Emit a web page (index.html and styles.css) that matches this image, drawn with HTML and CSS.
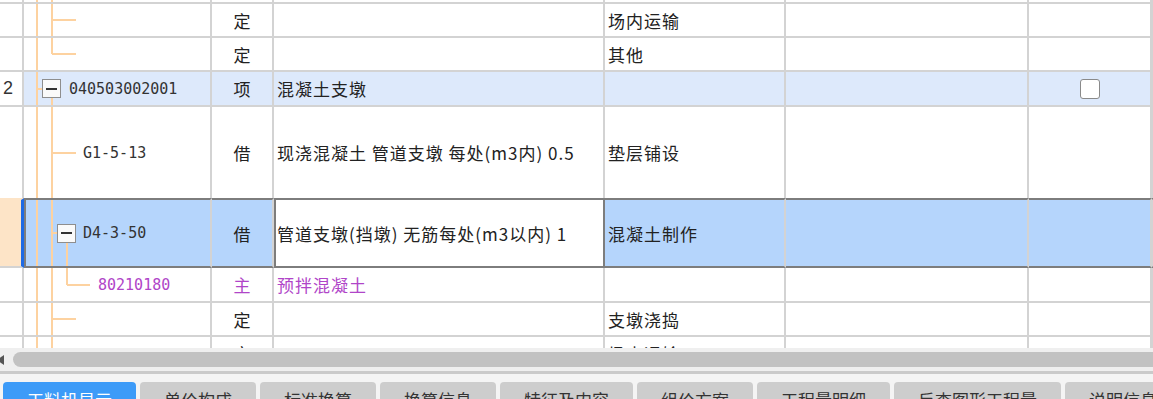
FILE: index.html
```html
<!DOCTYPE html>
<html lang="zh-CN">
<head>
    <meta charset="UTF-8">
    <meta name="viewport" content="width=device-width, initial-scale=1.0">
    <title>工料机显示</title>
    <link rel="stylesheet" href="styles.css">
</head>
<body>
    <div class="grid">
        <div class="row row-cut">
            <div class="cell c0"></div>
            <div class="cell c1"><span class="tl v1"></span><span class="tl v2"></span></div>
            <div class="cell c2"></div>
            <div class="cell c3"></div>
            <div class="cell c4"></div>
            <div class="cell c5"></div>
            <div class="cell c6"></div>
            <div class="cell c7"></div>
        </div>

        <div class="row">
            <div class="cell c0"></div>
            <div class="cell c1"><span class="tl v1"></span><span class="tl v2"></span><span class="tl h2"></span></div>
            <div class="cell c2">定</div>
            <div class="cell c3"></div>
            <div class="cell c4">场内运输</div>
            <div class="cell c5"></div>
            <div class="cell c6"></div>
            <div class="cell c7"></div>
        </div>

        <div class="row">
            <div class="cell c0"></div>
            <div class="cell c1"><span class="tl v1"></span><span class="tl v2 up"></span><span class="tl h2"></span></div>
            <div class="cell c2">定</div>
            <div class="cell c3"></div>
            <div class="cell c4">其他</div>
            <div class="cell c5"></div>
            <div class="cell c6"></div>
            <div class="cell c7"></div>
        </div>

        <div class="row row-item">
            <div class="cell c0 num">2</div>
            <div class="cell c1 lvl1">
                <span class="tl v1"></span><span class="tl hb1"></span><span class="tl v2 down"></span>
                <span class="toggle"></span><span class="code">040503002001</span>
            </div>
            <div class="cell c2">项</div>
            <div class="cell c3">混凝土支墩</div>
            <div class="cell c4"></div>
            <div class="cell c5"></div>
            <div class="cell c6"><span class="check"></span></div>
            <div class="cell c7"></div>
        </div>

        <div class="row row-tall">
            <div class="cell c0"></div>
            <div class="cell c1 lvl2">
                <span class="tl v1"></span><span class="tl v2"></span><span class="tl h2"></span>
                <span class="code">G1-5-13</span>
            </div>
            <div class="cell c2">借</div>
            <div class="cell c3">现浇混凝土 管道支墩 每处(m3内) 0.5</div>
            <div class="cell c4">垫层铺设</div>
            <div class="cell c5"></div>
            <div class="cell c6"></div>
            <div class="cell c7"></div>
        </div>

        <div class="row sel">
            <div class="cell c0"></div>
            <div class="cell c1 lvl2b">
                <span class="tl v1"></span><span class="tl v2"></span><span class="tl hb2"></span><span class="tl v3 down"></span>
                <span class="toggle"></span><span class="code">D4-3-50</span>
            </div>
            <div class="cell c2">借</div>
            <div class="cell c3">管道支墩(挡墩) 无筋每处(m3以内) 1</div>
            <div class="cell c4">混凝土制作</div>
            <div class="cell c5"></div>
            <div class="cell c6"></div>
            <div class="cell c7"></div>
        </div>

        <div class="row row-main">
            <div class="cell c0"></div>
            <div class="cell c1 lvl3">
                <span class="tl v1"></span><span class="tl v2"></span><span class="tl v3 up"></span><span class="tl h3"></span>
                <span class="code">80210180</span>
            </div>
            <div class="cell c2">主</div>
            <div class="cell c3">预拌混凝土</div>
            <div class="cell c4"></div>
            <div class="cell c5"></div>
            <div class="cell c6"></div>
            <div class="cell c7"></div>
        </div>

        <div class="row">
            <div class="cell c0"></div>
            <div class="cell c1"><span class="tl v1"></span><span class="tl v2"></span><span class="tl h2"></span></div>
            <div class="cell c2">定</div>
            <div class="cell c3"></div>
            <div class="cell c4">支墩浇捣</div>
            <div class="cell c5"></div>
            <div class="cell c6"></div>
            <div class="cell c7"></div>
        </div>

        <div class="row">
            <div class="cell c0"></div>
            <div class="cell c1"><span class="tl v1"></span><span class="tl v2"></span><span class="tl h2"></span></div>
            <div class="cell c2">定</div>
            <div class="cell c3"></div>
            <div class="cell c4">场内运输</div>
            <div class="cell c5"></div>
            <div class="cell c6"></div>
            <div class="cell c7"></div>
        </div>
    </div>

    <div class="hscroll">
        <span class="arrow-left"></span>
        <span class="thumb"></span>
    </div>
    <div class="hscroll-edge"></div>

    <div class="tabs">
        <div class="tab active">工料机显示</div>
        <div class="tab">单价构成</div>
        <div class="tab">标准换算</div>
        <div class="tab">换算信息</div>
        <div class="tab">特征及内容</div>
        <div class="tab">组价方案</div>
        <div class="tab">工程量明细</div>
        <div class="tab">反查图形工程量</div>
        <div class="tab">说明信息</div>
    </div>
</body>
</html>
```

FILE: styles.css
```css
* {
    margin: 0;
    padding: 0;
    box-sizing: border-box;
}

body {
    width: 1153px;
    height: 399px;
    overflow: hidden;
    background: #ffffff;
    font-family: "Noto Sans CJK SC", sans-serif;
    font-size: 17px;
    color: #222;
}

/* grid */

.grid {
    height: 348px;
    overflow: hidden;
}

.row {
    display: flex;
    height: 34px;
}

.row-cut {
    height: 4px;
}

.row-item {
    height: 35px;
}

.row-tall {
    height: 93px;
}

.row-main {
    height: 35px;
    color: #b045c8;
}

.cell {
    display: flex;
    align-items: center;
    flex-shrink: 0;
    border-right: 2px solid #d3d3d3;
    border-bottom: 2px solid #d3d3d3;
    letter-spacing: 1px;
    white-space: nowrap;
    overflow: hidden;
}

.c0 { width: 24px; }
.c1 { width: 188px; position: relative; }
.c2 { width: 62px; justify-content: center; letter-spacing: 0; }
.c3 { width: 331px; padding-left: 3px; }
.c4 { width: 181px; padding-left: 3px; }
.c5 { width: 243px; }
.c6 { width: 123px; justify-content: center; }
.c7 { flex: 1; flex-shrink: 1; }

.num {
    padding-left: 3px;
    font-family: "Liberation Sans", sans-serif;
    font-size: 18px;
    color: #333;
    letter-spacing: 0;
}

.code {
    font-family: "DejaVu Sans Mono", monospace;
    font-size: 15px;
    letter-spacing: 0;
    color: #333;
    position: relative;
}

.row-main .code {
    color: #b045c8;
}

.lvl1 { padding-left: 18px; }
.lvl2 { padding-left: 59px; }
.lvl2b { padding-left: 33px; }
.lvl3 { padding-left: 74px; }

.lvl2b .toggle {
    margin-right: 7px;
}

/* tree connectors */

.tl {
    position: absolute;
    background: #fdd2a0;
}

.v1, .v2, .v3 {
    top: 0;
    bottom: 0;
    width: 2px;
}

.v1 { left: 12px; }
.v2 { left: 27px; }
.v3 { left: 42px; }

.up { bottom: 50%; }
.down { top: calc(50% + 9px); }

.h2, .h3, .hb1, .hb2 {
    top: 50%;
    height: 2px;
    margin-top: -1px;
}

.h2 { left: 28px; width: 24px; }
.h3 { left: 43px; width: 23px; }
.hb1 { left: 13px; width: 5px; }
.hb2 { left: 28px; width: 5px; }

.toggle {
    width: 19px;
    height: 19px;
    margin-right: 8px;
    border: 1px solid #8e8e8e;
    background: #fafafa;
    display: flex;
    align-items: center;
    justify-content: center;
    position: relative;
    flex-shrink: 0;
}

.toggle::before {
    content: '';
    width: 11px;
    height: 2px;
    background: #333;
}

.check {
    width: 20px;
    height: 20px;
    border: 1px solid #8a8a8a;
    border-radius: 3px;
    background: #fff;
}

/* row states */

.row-item .cell {
    background: #dde9fb;
}

.row-item .c0 {
    background: #fff;
}

.sel {
    height: 70px;
    margin-top: -2px;
}

.sel .cell {
    background: #b5d5fc;
    border-top: 2px solid #7d7d7d;
    border-bottom: 2px solid #7d7d7d;
}

.sel .c0 {
    background: #fde4c7;
    border-top-color: #fde4c7;
    border-bottom-color: #d3d3d3;
    border-right: 3px solid #1d6ae5;
}

.sel .c1 {
    box-shadow: inset 2px 0 #7d7d7d;
}

.sel .c3 {
    background: #fff;
    box-shadow: inset 2px 0 #7d7d7d;
    border-right-color: #7d7d7d;
}

/* horizontal scrollbar */

.hscroll {
    height: 23px;
    background: #efefef;
    display: flex;
    align-items: center;
    overflow: hidden;
}

.arrow-left {
    width: 0;
    height: 0;
    margin-left: -3px;
    border-top: 5px solid transparent;
    border-bottom: 5px solid transparent;
    border-right: 7px solid #555;
}

.thumb {
    flex: 1;
    height: 15px;
    margin-left: 9px;
    margin-right: -12px;
    border-radius: 8px;
    background: #c2c2c2;
}

.hscroll-edge {
    height: 3px;
    background: #cacaca;
}

/* bottom tabs */

.tabs {
    height: 28px;
    padding: 8px 0 0 3px;
    display: flex;
    gap: 4px;
    background: #f4f4f4;
    overflow: hidden;
}

.tab {
    height: 30px;
    padding: 6px 24px 0;
    line-height: 24px;
    border-radius: 4px 4px 0 0;
    background: #cdcdcd;
    color: #333;
    white-space: nowrap;
    flex-shrink: 0;
}

.tab.active {
    background: #3d9bf8;
    color: #fff;
}
```
